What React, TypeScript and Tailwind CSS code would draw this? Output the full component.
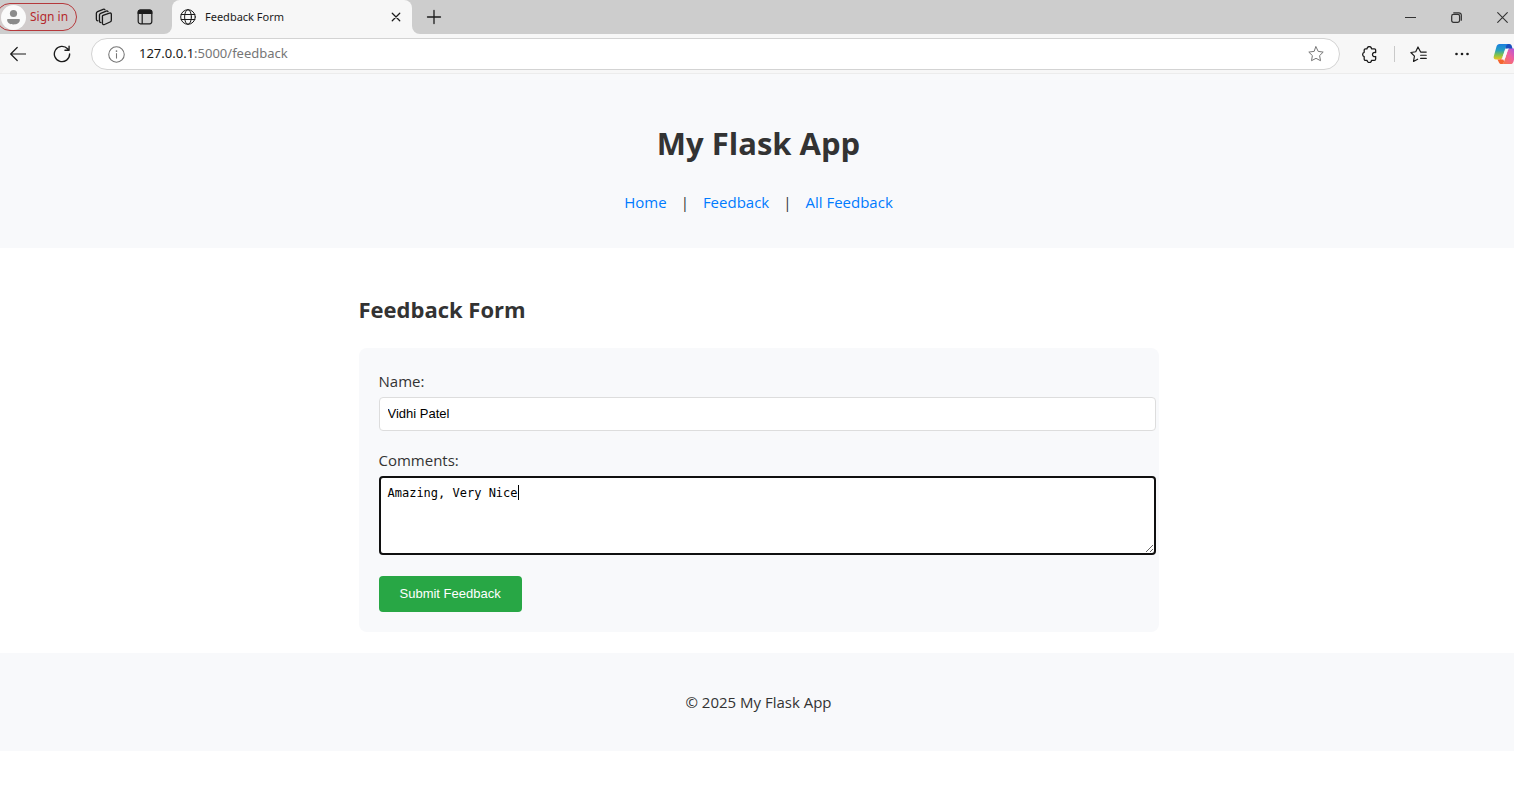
import React from "react";

const page = "font-['Open_Sans','Noto_Sans',sans-serif]";
const chrome = "font-['Noto_Sans',sans-serif]";

function Icon({ size = 16, width = 1.2, children }: { size?: number; width?: number; children: React.ReactNode }) {
  return (
    <svg width={size} height={size} viewBox="0 0 16 16" fill="none" stroke="currentColor" strokeWidth={width} strokeLinecap="round" strokeLinejoin="round" aria-hidden="true" className="shrink-0">
      {children}
    </svg>
  );
}

function TabStrip() {
  return (
    <div className="flex h-[34px] items-stretch bg-[#f7f7f7] text-[#1b1b1b]">
      <div className="flex w-[172px] shrink-0 items-center rounded-br-lg bg-[#cdcdcd]">
        <button className="-ml-1 flex h-7 w-[81px] items-center gap-1 rounded-full border border-[#b5393c] bg-[#d1cccc] pl-1 text-xs text-[#b5292d]">
          <svg width="25" height="25" viewBox="0 0 25 25" aria-hidden="true" className="shrink-0">
            <circle cx="12.5" cy="12.5" r="12.5" fill="#fafafa" />
            <circle cx="12.5" cy="8.5" r="3.6" fill="#8b8b8b" />
            <path d="M6.8 14h11.4c.4 0 .7.3.7.7 0 3-2.600 4.700-6.400 4.700s-6.400-1.700-6.400-4.700c0-.4.3-.7.700-.7z" fill="#8b8b8b" />
          </svg>
          Sign in
        </button>
        <button aria-label="Workspaces" className="ml-4 flex w-5 justify-center">
          <Icon size={19} width={1.1}>
            <path d="M7.600 6.200 13 4.300c.9-.3 1.600.1 1.600 1v5c0 .7-.4 1.200-1.100 1.500l-4.600 2.100c-1 .4-1.800 0-1.800-1V7c0-.4.100-.7.500-.8z" />
            <path d="M5.900 12.300c-.8 0-1.300-.5-1.300-1.300V5.900c0-.7.300-1.100 1-1.400l4.700-1.900c.6-.2 1.200-.1 1.500.4" />
            <path d="M3.300 10.800c-.8 0-1.300-.5-1.300-1.300V4.400c0-.7.300-1.100 1-1.400l4.700-1.900c.6-.2 1.200-.1 1.500.4" />
          </Icon>
        </button>
        <button aria-label="Tab actions" className="ml-6 flex w-4 justify-center">
          <Icon>
            <rect x="1.200" y="1.200" width="13.600" height="13.600" rx="2.200" />
            <path d="M1.200 4.500V3.400c0-1.200 1-2.200 2.200-2.200h9.200c1.200 0 2.200 1 2.200 2.200v1.100z" fill="currentColor" />
            <path d="M5.200 5v9.500" />
          </Icon>
        </button>
      </div>
      <div className="flex w-60 shrink-0 bg-[#cdcdcd]">
        <div className="flex flex-1 items-center rounded-t-lg bg-[#f7f7f7] px-2">
          <Icon width={1}>
            <circle cx="8" cy="8" r="7.300" />
            <ellipse cx="8" cy="8" rx="3.400" ry="7.300" />
            <path d="M1.200 5.500h13.600M1.200 10.500h13.600" />
          </Icon>
          <span className="ml-[9px] flex-1 text-[11px]">Feedback Form</span>
          <button aria-label="Close tab" className="flex w-4 justify-center">
            <Icon size={10} width={2}><path d="m2 2 12 12M14 2 2 14" /></Icon>
          </button>
        </div>
      </div>
      <div className="flex flex-1 items-center rounded-bl-lg bg-[#cdcdcd] pl-3.5">
        <button aria-label="New tab">
          <Icon width={1.300}><path d="M8 1.500v13M1.500 8h13" /></Icon>
        </button>
        <div className="flex flex-1 items-center justify-end text-[#333]">
          <button aria-label="Minimize" className="mr-[35px]"><Icon size={11} width={1.500}><path d="M0 8h16" /></Icon></button>
          <button aria-label="Restore" className="mr-[35px]">
            <Icon size={11} width={1.800}>
              <rect x="1" y="3.500" width="11.500" height="11.500" rx="2.500" />
              <path d="M4 1.200h7.500A3.500 3.500 0 0 1 15 4.700V12" />
            </Icon>
          </button>
          <button aria-label="Close window" className="mr-1.5"><Icon size={11} width={1.600}><path d="m1 1 14 14M15 1 1 15" /></Icon></button>
        </div>
      </div>
    </div>
  );
}

function Toolbar() {
  return (
    <div className="flex h-10 items-center border-b border-[#ececec] bg-[#f7f7f7] pt-px text-[#1b1b1b]">
      <button aria-label="Back" className="ml-2.5"><Icon width={1.200}><path d="M15.500 8H.7M7.200 1.500.7 8l6.500 6.500" /></Icon></button>
      <button aria-label="Refresh" className="ml-[27px]">
        <Icon size={18} width={1.200}>
          <path d="M14.800 8A6.800 6.800 0 1 1 13 3.400l1.300 1.300M14.300 1v3.700h-3.700" />
        </Icon>
      </button>
      <div className="ml-5 flex h-8 flex-1 items-center rounded-full border border-[#d3d3d3] bg-white pr-[15px] pl-4 text-[#767676]">
        <Icon size={17} width={1}>
          <circle cx="8" cy="8" r="7.300" />
          <path d="M8 7.200v4.200" />
          <path d="M8 4.700v.1" strokeWidth="1.600" />
        </Icon>
        <a href="#feedback" className="ml-3.5 flex-1 text-[13px]"><span className="text-[#1b1b1b]">127.0.0.1</span>:5000/feedback</a>
        <button aria-label="Add to favorites"><Icon width={1}><path d="m8 .8 2.200 4.600 5 .7-3.600 3.500.9 5.100L8 12.300l-4.500 2.400.9-5.100L.8 6.100l5-.7z" /></Icon></button>
      </div>
      <button aria-label="Extensions" className="ml-[21px]">
        <Icon size={17} width={1.200}>
          <path d="M5.700 2.600a2.100 2.100 0 0 1 4.200 0h2.700c.7 0 1.200.5 1.200 1.200v2.400c-2-.5-3 .6-3 1.800s1 2.400 3 1.900v2.400c0 .7-.5 1.200-1.200 1.200H9.900a2.100 2.100 0 0 1-4.200 0H4.200c-.7 0-1.200-.5-1.200-1.200V9.900a2.100 2.100 0 0 1 0-4V3.800c0-.7.5-1.200 1.200-1.200z" />
        </Icon>
      </button>
      <span className="ml-4 h-4 w-px bg-[#c9c9c9]" />
      <button aria-label="Favorites" className="ml-[15px]">
        <Icon size={17} width={1.100}>
          <path d="M15.300 5.700H10L7.500.9 5.400 5.400.8 6.100l3.400 3.500-.9 4.900 3.900-2.100M10 8.700h5.300M10 11.700h5.300" />
        </Icon>
      </button>
      <button aria-label="Settings and more" className="ml-[27px]">
        <Icon><g fill="currentColor" stroke="none"><circle cx="2.500" cy="8" r="1.300" /><circle cx="8" cy="8" r="1.300" /><circle cx="13.500" cy="8" r="1.300" /></g></Icon>
      </button>
      <button aria-label="Copilot" className="ml-[23px] w-[21px] overflow-hidden">
        <svg width="24" height="22" viewBox="0 0 24 22" aria-hidden="true" className="max-w-none">
          <defs>
            <linearGradient id="cool" x1="0" y1="0" x2="0" y2="1">
              <stop offset="0" stopColor="#1b7fe0" /><stop offset=".4" stopColor="#25a0c0" /><stop offset=".7" stopColor="#7fc34c" /><stop offset="1" stopColor="#f2c51d" />
            </linearGradient>
            <linearGradient id="warm" x1="1" y1="0" x2="0" y2="1">
              <stop offset="0" stopColor="#a256e8" /><stop offset=".45" stopColor="#ee5fa0" /><stop offset="1" stopColor="#fb7a3c" />
            </linearGradient>
          </defs>
          <path d="M11 1h5.500c1.200 0 1.800.7 2.200 1.800l1.100 3.700h-3.300c-1.500 0-2.300.8-2.800 2.300z" fill="#1a50c0" />
          <path d="M6.500 1H15c-1.200.4-1.700 1.300-2.100 2.600L9.500 14c-.5 1.600-1.500 2.500-3 2.500H3c-2 0-2.700-1.400-2.200-3.200l2.700-9.700C4 1.900 4.900 1 6.500 1z" fill="url(#cool)" />
          <path d="M17.500 21H9c1.200-.4 1.700-1.300 2.100-2.600L14.500 8c.5-1.600 1.500-2.500 3-2.500H21c2 0 2.700 1.400 2.200 3.200l-2.700 9.700c-.5 1.700-1.400 2.600-3 2.600z" fill="url(#warm)" />
          <path d="M4.500 16.500h2c1.500 0 2.500-.9 3-2.500l1.600 4.400C10.700 20 10.200 21 8.500 21c-2.500 0-2.600-2-4-4.500z" fill="#f4642f" />
          <path d="M12.400 6.800c.4-.9 1-1.300 2-1.300h2.300c-1.200.4-1.700 1.300-2.100 2.500l-2.400 7c-.3.900-1 1.500-2 1.500H8c.8-.4 1.200-1.200 1.500-2.200z" fill="#fafafa" />
        </svg>
      </button>
    </div>
  );
}

export default function App() {
  return (
    <div className="overflow-hidden bg-white">
      <div className={chrome}>
        <TabStrip />
        <Toolbar />
      </div>
      <div className={`${page} -mr-[3px] text-[15px] text-[#333]`}>
        <header className="bg-[#f8f9fb] px-5 pt-[45px] pb-[33px] text-center">
          <h1 className="text-[31px] leading-12 font-bold">My Flask App</h1>
          <nav className="mt-[22px] flex items-center justify-center gap-3.5 leading-[26px]">
            <a href="#home" className="text-[#007bff]">Home</a>
            <span>|</span>
            <a href="#feedback" className="text-[#007bff]">Feedback</a>
            <span>|</span>
            <a href="#all" className="text-[#007bff]">All Feedback</a>
          </nav>
        </header>
        <main id="feedback" className="mx-auto max-w-[800px] pt-[43px] pb-[21px]">
          <h2 className="text-[22px] leading-9 font-bold">Feedback Form</h2>
          <form className="mt-[21px] rounded-lg bg-[#f8f9fb] py-5 pr-[3px] pl-5" onSubmit={(e) => e.preventDefault()}>
            <label htmlFor="name" className="block leading-[26px]">Name:</label>
            <input id="name" defaultValue="Vidhi Patel" className="mt-[3px] block h-[34px] w-full rounded border border-[#ddd] bg-white px-2 pb-0.5 font-['Liberation_Sans',sans-serif] text-[13px] text-black" />
            <label htmlFor="comments" className="mt-4 block leading-[26px]">Comments:</label>
            <div className="relative mt-[3px] font-['DejaVu_Sans_Mono',monospace] text-xs leading-4 text-black">
              <textarea id="comments" spellCheck={false} defaultValue="Amazing, Very Nice" className="block h-[79px] w-full rounded border-2 border-[#101010] bg-white px-[7px] py-[7px] outline-none" />
              <span aria-hidden="true" className="pointer-events-none absolute top-[9px] left-[139px] h-[15px] w-px bg-black" />
            </div>
            <button className="mt-[21px] block h-9 rounded bg-[#28a745] px-[21px] font-['Liberation_Sans',sans-serif] text-[13px] text-white">Submit Feedback</button>
          </form>
        </main>
        <footer className="bg-[#f8f9fb] py-9 text-center leading-[26px]">© 2025 My Flask App</footer>
      </div>
    </div>
  );
}
